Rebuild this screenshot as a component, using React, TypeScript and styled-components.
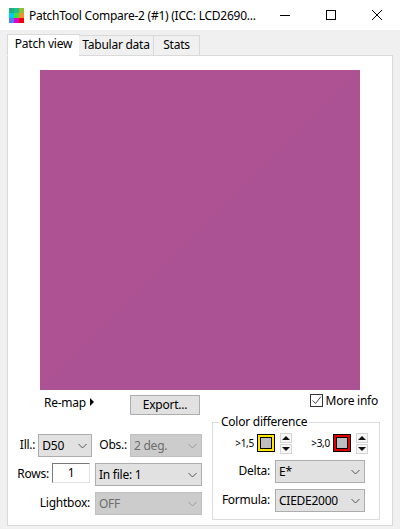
import * as React from 'react';
import styled, { createGlobalStyle } from 'styled-components';

const GlobalStyle = createGlobalStyle`
  html, body {
    margin: 0;
    padding: 0;
    background: #fff;
  }
  body {
    font-family: 'Noto Sans', 'Open Sans', sans-serif;
    font-size: 12px;
    letter-spacing: -0.25px;
    color: #000;
  }
`;

const Window = styled.div`
  width: 400px;
  height: 529px;
  display: flex;
  flex-direction: column;
  overflow: hidden;
`;

const TitleBar = styled.div`
  height: 30px;
  display: flex;
  align-items: center;
  background: #fff;
  padding-left: 9px;
`;

const TitleText = styled.div`
  margin-left: 5px;
  flex: 1;
  font-size: 12px;
  white-space: nowrap;
`;

const WinButton = styled.div`
  width: 46px;
  height: 30px;
  display: flex;
  align-items: center;
  justify-content: center;
`;

const Body = styled.div`
  flex: 1;
  background: #f0f0f0;
  padding: 4px 7px 0;
  display: flex;
  flex-direction: column;
  min-height: 0;
`;

const TabRow = styled.div`
  display: flex;
  align-items: flex-end;
  height: 22px;
  margin-bottom: -1px;
  position: relative;
  z-index: 1;
`;

const Tab = styled.div<{ $active?: boolean; $width: number }>`
  box-sizing: border-box;
  width: ${(p) => p.$width}px;
  height: ${(p) => (p.$active ? 22 : 21)}px;
  margin-right: ${(p) => (p.$active ? -1 : 0)}px;
  border: 1px solid #d9d9d9;
  border-left-width: ${(p) => (p.$active ? 1 : 0)}px;
  border-bottom-color: ${(p) => (p.$active ? '#fff' : '#d9d9d9')};
  background: ${(p) => (p.$active ? '#fff' : '#f0f0f0')};
  font-size: 12px;
  line-height: 18px;
  text-align: center;
`;

const Panel = styled.div`
  box-sizing: border-box;
  width: 386px;
  height: 471px;
  border: 1px solid #d9d9d9;
  background: #fff;
  padding: 14px 32px 0;
  display: flex;
  flex-direction: column;
`;

const Patch = styled.div`
  width: 320px;
  height: 320px;
  flex: none;
  background: linear-gradient(135deg, #ae5293 0 50%, #aa5294 50% 100%);
`;

const ActionRow = styled.div`
  display: grid;
  grid-template-columns: 86px 70px 1fr;
  height: 23px;
  margin: 5px -32px 0;
  padding-left: 36px;
`;

const Remap = styled.div`
  display: flex;
  align-items: center;
  gap: 4px;
  height: 14px;
`;

const RemapArrow = styled.span`
  width: 0;
  height: 0;
  border-left: 4px solid #000;
  border-top: 4px solid transparent;
  border-bottom: 4px solid transparent;
`;

const ExportButton = styled.div`
  box-sizing: border-box;
  width: 70px;
  height: 20px;
  border: 1px solid #adadad;
  background: #e1e1e1;
  text-align: center;
  line-height: 18px;
  font-size: 12px;
`;

const MoreInfo = styled.div`
  display: flex;
  align-items: center;
  justify-content: flex-end;
  gap: 3px;
  height: 13px;
  padding-right: 14px;
  margin-top: -1px;
`;

const CheckBox = styled.div`
  box-sizing: border-box;
  width: 13px;
  height: 13px;
  border: 1px solid #333;
  background: #fff;
  display: flex;
`;

const Controls = styled.div`
  display: flex;
  margin: 0 -32px;
`;

const LeftColumn = styled.div`
  display: flex;
  flex: none;
  flex-direction: column;
  gap: 6px;
  margin-top: 16px;
  width: 194px;
`;

const FormRow = styled.div`
  display: flex;
  align-items: flex-start;
  justify-content: flex-end;
  height: 23px;
  line-height: 21px;
`;

const FieldLabel = styled.span<{ $gap?: number; $lead?: number }>`
  margin-right: ${(p) => p.$gap ?? 3}px;
  margin-left: ${(p) => p.$lead ?? 0}px;
`;

const SelectBox = styled.div<{ $width: number; $disabled?: boolean }>`
  box-sizing: border-box;
  flex: none;
  width: ${(p) => p.$width}px;
  height: 23px;
  border: 1px solid ${(p) => (p.$disabled ? '#bfbfbf' : '#adadad')};
  background: ${(p) => (p.$disabled ? '#cccccc' : '#e1e1e1')};
  color: ${(p) => (p.$disabled ? '#6d6d6d' : '#000')};
  display: flex;
  align-items: center;
  justify-content: space-between;
  padding: 0 4px 0 3px;
  font-size: 12px;
`;

const RowsInput = styled.div`
  box-sizing: border-box;
  width: 38px;
  height: 20px;
  border: 1px solid #7a7a7a;
  border-right-color: #e3e3e3;
  border-bottom-color: #e3e3e3;
  background: #fff;
  text-align: center;
  line-height: 17px;
  margin-right: 5px;
`;

const Group = styled.fieldset`
  box-sizing: border-box;
  flex: none;
  width: 168px;
  height: 105px;
  margin: -3px 0 0 10px;
  padding: 0;
  border: 1px solid #dcdcdc;
`;

const GroupTitle = styled.legend`
  margin-left: 6px;
  padding: 0 2px;
  font-size: 12px;
  line-height: 14px;
`;

const ThresholdRow = styled.div`
  display: grid;
  grid-template-columns: 76px 76px;
  margin: 3px 0 3px;
  padding-left: 3px;
`;

const Threshold = styled.div`
  display: flex;
  align-items: center;
  justify-content: flex-end;
  height: 22px;
`;

const ThresholdLabel = styled.span`
  font-size: 10px;
  margin-right: 3px;
`;

const Swatch = styled.div<{ $color: string }>`
  box-sizing: border-box;
  width: 18px;
  height: 18px;
  border: 1px solid #000;
  background: ${(p) => p.$color};
  padding: 2px;
`;

const SwatchFill = styled.div`
  box-sizing: border-box;
  width: 100%;
  height: 100%;
  border: 1px solid #000;
  background: #bdbdbd;
`;

const Spinner = styled.div`
  margin-left: 5px;
  display: flex;
  flex-direction: column;
  gap: 1px;
`;

const SpinButton = styled.div`
  box-sizing: border-box;
  width: 12px;
  height: 10px;
  background: #f6f6f6;
  border: 1px solid #d4d4d4;
  display: flex;
  align-items: center;
  justify-content: center;
`;

const GroupRow = styled.div`
  display: flex;
  justify-content: flex-end;
  align-items: flex-start;
  height: 23px;
  line-height: 21px;
  margin-top: 6px;
  padding-right: 14px;
`;

const Chevron = ({ light }: { light?: boolean }) => (
  <svg width="9" height="6" viewBox="0 0 9 6">
    <path d="M.5 1l4 4 4-4" fill="none" stroke={light ? '#9a9a9a' : '#555'} strokeWidth="1" />
  </svg>
);

const Select = ({ value, width, disabled }: { value: string; width: number; disabled?: boolean }) => (
  <SelectBox $width={width} $disabled={disabled}>
    <span>{value}</span>
    <Chevron light={disabled} />
  </SelectBox>
);

const SpinArrow = ({ down }: { down?: boolean }) => (
  <svg width="8" height="4" viewBox="0 0 8 4">
    <path d={down ? 'M0 0h8L4 4z' : 'M4 0l4 4H0z'} fill="#111" />
  </svg>
);

const Spin = () => (
  <Spinner>
    <SpinButton><SpinArrow /></SpinButton>
    <SpinButton><SpinArrow down /></SpinButton>
  </Spinner>
);

const logoColors = ['#20b080', '#20c090', '#90c030', '#00d0f0', '#40e040', '#f09030', '#5080f0', '#e000d0', '#f00000'];

const Logo = () => (
  <svg width="15" height="15" viewBox="0 0 15 15">
    {logoColors.map((c, i) => (
      <rect key={c} x={(i % 3) * 5} y={Math.floor(i / 3) * 5} width="5" height="5" fill={c} />
    ))}
  </svg>
);

const App = () => {
  return (
    <Window>
      <GlobalStyle />
      <TitleBar>
        <Logo />
        <TitleText>PatchTool Compare-2 (#1) (ICC: LCD2690...</TitleText>
        <WinButton>
          <svg width="10" height="10" viewBox="0 0 10 10"><path d="M0 5.5h10" stroke="#000" /></svg>
        </WinButton>
        <WinButton>
          <svg width="10" height="10" viewBox="0 0 10 10"><rect x=".5" y=".5" width="9" height="9" fill="none" stroke="#000" /></svg>
        </WinButton>
        <WinButton>
          <svg width="10" height="10" viewBox="0 0 10 10"><path d="M0 0l10 10M10 0L0 10" stroke="#000" /></svg>
        </WinButton>
      </TitleBar>
      <Body>
        <TabRow>
          <Tab $active $width={73}>Patch view</Tab>
          <Tab $width={75}>Tabular data</Tab>
          <Tab $width={46}>Stats</Tab>
        </TabRow>
        <Panel>
          <Patch />
          <ActionRow>
            <Remap>Re-map <RemapArrow /></Remap>
            <ExportButton>Export...</ExportButton>
            <MoreInfo>
              <CheckBox>
                <svg width="11" height="11" viewBox="0 0 11 11"><path d="M1.5 5.5l3 3 5.5-7" fill="none" stroke="#444" /></svg>
              </CheckBox>
              More info
            </MoreInfo>
          </ActionRow>
          <Controls>
            <LeftColumn>
              <FormRow>
                <FieldLabel>Ill.:</FieldLabel>
                <Select value="D50" width={54} />
                <FieldLabel $lead={7}>Obs.:</FieldLabel>
                <Select value="2 deg." width={72} disabled />
              </FormRow>
              <FormRow>
                <FieldLabel>Rows:</FieldLabel>
                <RowsInput>1</RowsInput>
                <Select value="In file: 1" width={107} />
              </FormRow>
              <FormRow>
                <FieldLabel $gap={5}>Lightbox:</FieldLabel>
                <Select value="OFF" width={107} disabled />
              </FormRow>
            </LeftColumn>
            <Group>
              <GroupTitle>Color difference</GroupTitle>
              <ThresholdRow>
                <Threshold>
                  <ThresholdLabel>&gt;1,5</ThresholdLabel>
                  <Swatch $color="#ffe600"><SwatchFill /></Swatch>
                  <Spin />
                </Threshold>
                <Threshold>
                  <ThresholdLabel>&gt;3,0</ThresholdLabel>
                  <Swatch $color="#e00000"><SwatchFill /></Swatch>
                  <Spin />
                </Threshold>
              </ThresholdRow>
              <GroupRow>
                <FieldLabel $gap={5}>Delta:</FieldLabel>
                <Select value="E*" width={90} />
              </GroupRow>
              <GroupRow>
                <FieldLabel $gap={5}>Formula:</FieldLabel>
                <Select value="CIEDE2000" width={90} />
              </GroupRow>
            </Group>
          </Controls>
        </Panel>
      </Body>
    </Window>
  );
};

export default App;
